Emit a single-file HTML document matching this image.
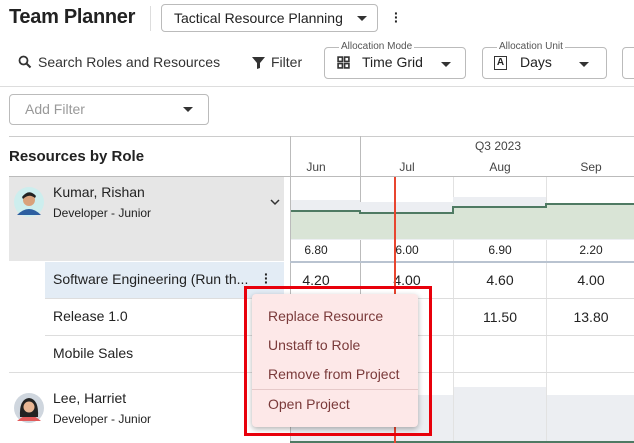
<!DOCTYPE html><html><head><style>
*{box-sizing:border-box;margin:0;padding:0}
body{width:634px;height:443px;overflow:hidden;background:#fff;font-family:"Liberation Sans",sans-serif;color:#222;position:relative}
.a{position:absolute;white-space:nowrap}
.box{position:absolute;border:1px solid #bbb;border-radius:4px}
.lbl{position:absolute;font-size:10px;color:#555;background:#fff;padding:0 2px;top:-7px}
.caret{position:absolute;width:0;height:0;border-left:5px solid transparent;border-right:5px solid transparent;border-top:5px solid #333}
.hl{position:absolute;height:1px;background:#ddd}
.vl{position:absolute;width:1px;background:#e2e2e2}
.n{position:absolute;font-size:14px;transform:translateX(-50%)}
.mi{position:absolute;left:16px;font-size:14px;color:#7a3a3a}
</style></head><body>
<div class="a" style="left:9px;top:6px;font-size:20px;font-weight:bold;color:#222;letter-spacing:-0.3px">Team Planner</div>
<div class="a" style="left:150px;top:6px;width:1px;height:25px;background:#ddd"></div>
<div class="box" style="left:161px;top:4px;width:217px;height:28px"><div class="a" style="left:12px;top:5px;font-size:14px">Tactical Resource Planning</div><div class="caret" style="left:195px;top:11px"></div></div>
<div class="a" style="left:394px;top:11px;font-size:14px;font-weight:bold;line-height:4px">·<br>·<br>·</div>
<svg class="a" style="left:18px;top:55px" width="14" height="14" viewBox="0 0 14 14"><circle cx="5.5" cy="5.5" r="4" stroke="#333" stroke-width="1.8" fill="none"/><path d="M8.5 8.5L12.5 12.5" stroke="#333" stroke-width="2"/></svg>
<div class="a" style="left:38px;top:54px;font-size:14px;color:#333">Search Roles and Resources</div>
<svg class="a" style="left:252px;top:56px" width="13" height="13" viewBox="0 0 13 13"><path d="M0 1h13L8 7v5L5 13V7z" fill="#333"/></svg>
<div class="a" style="left:271px;top:54px;font-size:14px;color:#333">Filter</div>
<div class="box" style="left:324px;top:47px;width:142px;height:32px"><div class="lbl" style="left:14px">Allocation Mode</div>
<svg class="a" style="left:12px;top:8px" width="13" height="13" viewBox="0 0 12 12" fill="none" stroke="#333" stroke-width="1.5"><rect x="1" y="1" width="4" height="4"/><rect x="7" y="1" width="4" height="4"/><rect x="1" y="7" width="4" height="4"/><rect x="7" y="7" width="4" height="4"/></svg>
<div class="a" style="left:37px;top:6px;font-size:14px">Time Grid</div><div class="caret" style="left:116px;top:14px"></div></div>
<div class="box" style="left:482px;top:47px;width:125px;height:32px"><div class="lbl" style="left:14px">Allocation Unit</div>
<div class="a" style="left:11px;top:8px;width:13px;height:14px;border:1.5px solid #333;font-size:10px;text-align:center;line-height:11px;font-weight:bold">A</div>
<div class="a" style="left:37px;top:6px;font-size:14px">Days</div><div class="caret" style="left:96px;top:14px"></div></div>
<div class="box" style="left:622px;top:47px;width:30px;height:32px"></div>
<div class="hl" style="left:0;top:86px;width:634px"></div>
<div class="box" style="left:9px;top:94px;width:200px;height:31px"><div class="a" style="left:15px;top:6px;font-size:14px;color:#999">Add Filter</div><div class="caret" style="left:173px;top:12px"></div></div>
<div class="hl" style="left:9px;top:136px;width:625px;background:#ccc"></div>
<div class="a" style="left:9px;top:148px;font-size:15px;font-weight:bold">Resources by Role</div>
<div class="a" style="left:290px;top:136px;width:1px;height:307px;background:#bbb"></div>
<div class="a" style="left:360px;top:136px;width:1px;height:307px;background:#bbb"></div>
<div class="n" style="left:498px;top:139px;font-size:12px;color:#444">Q3 2023</div>
<div class="n" style="left:316px;top:160px;font-size:12px;color:#444">Jun</div>
<div class="n" style="left:407px;top:160px;font-size:12px;color:#444">Jul</div>
<div class="n" style="left:500px;top:160px;font-size:12px;color:#444">Aug</div>
<div class="n" style="left:591px;top:160px;font-size:12px;color:#444">Sep</div>
<div class="hl" style="left:9px;top:176px;width:625px;background:#bbb"></div>
<div class="vl" style="left:453px;top:177px;height:266px"></div>
<div class="vl" style="left:546px;top:177px;height:266px"></div>
<div class="a" style="left:9px;top:177px;width:275px;height:84px;background:#e6e6e6"></div>
<svg class="a" style="left:291px;top:177px" width="343" height="63"><path d="M0 23H69V25H162V20H255V27H343V63H0Z" fill="#eceef2"/><path d="M0 34H69V36H162V30H255V27H343V62H0Z" fill="#d9e4d6"/><path d="M0 34H69V36H162V30H255V27H343" stroke="#4f7a63" stroke-width="2" fill="none"/></svg>
<svg class="a" style="left:14px;top:187px" width="30" height="30"><circle cx="15" cy="15" r="15" fill="#cdeeee"/><path d="M3 28Q15 16 27 28" fill="#2d5fa0"/><circle cx="15" cy="13" r="6" fill="#d9a27c"/><path d="M8 10Q15 1 22 9L21 11Q15 6 9 12z" fill="#222"/></svg>
<div class="a" style="left:53px;top:184px;font-size:14px">Kumar, Rishan</div>
<div class="a" style="left:53px;top:206px;font-size:12px">Developer - Junior</div>
<svg class="a" style="left:270px;top:199px" width="10" height="7"><path d="M1 1l4 4 4-4" stroke="#333" stroke-width="1.5" fill="none"/></svg>
<div class="n" style="left:316px;top:243px;font-size:12px">6.80</div><div class="n" style="left:407px;top:243px;font-size:12px">6.00</div><div class="n" style="left:500px;top:243px;font-size:12px">6.90</div><div class="n" style="left:591px;top:243px;font-size:12px">2.20</div>
<div class="a" style="left:290px;top:261px;width:344px;height:2px;background:#b9c3d0"></div>
<div class="a" style="left:45px;top:262px;width:239px;height:36px;background:#e3ecf5"></div>
<div class="a" style="left:53px;top:271px;font-size:14px">Software Engineering (Run th...</div>
<div class="a" style="left:264px;top:272px;font-size:14px;font-weight:bold;line-height:4px">·<br>·<br>·</div>
<div class="n" style="left:316px;top:272px">4.20</div><div class="n" style="left:407px;top:272px">4.00</div><div class="n" style="left:500px;top:272px">4.60</div><div class="n" style="left:591px;top:272px">4.00</div>
<div class="hl" style="left:45px;top:298px;width:589px"></div>
<div class="a" style="left:53px;top:308px;font-size:14px">Release 1.0</div>
<div class="n" style="left:500px;top:309px">11.50</div><div class="n" style="left:591px;top:309px">13.80</div>
<div class="hl" style="left:45px;top:335px;width:589px"></div>
<div class="a" style="left:53px;top:345px;font-size:14px">Mobile Sales</div>
<div class="hl" style="left:9px;top:372px;width:625px"></div>
<div class="a" style="left:291px;top:395px;width:162px;height:48px;background:#eceef2"></div>
<div class="a" style="left:454px;top:387px;width:92px;height:56px;background:#eceef2"></div>
<div class="a" style="left:547px;top:395px;width:87px;height:48px;background:#eceef2"></div>
<div class="a" style="left:290px;top:441px;width:344px;height:2px;background:#4f7a63"></div>
<svg class="a" style="left:14px;top:393px" width="30" height="30"><circle cx="15" cy="15" r="15" fill="#cfd6de"/><path d="M3 28Q15 17 27 28" fill="#e25a5a"/><path d="M6 24Q5 6 15 5Q25 6 24 24z" fill="#222"/><circle cx="15" cy="14" r="5.5" fill="#e8b694"/></svg>
<div class="a" style="left:53px;top:390px;font-size:14px">Lee, Harriet</div>
<div class="a" style="left:53px;top:412px;font-size:12px">Developer - Junior</div>
<div class="a" style="left:394px;top:177px;width:1.5px;height:266px;background:#e8452f"></div>
<div class="a" style="left:252px;top:294px;width:166px;height:133px;background:#fde8e8;border-radius:4px;box-shadow:0 2px 6px rgba(0,0,0,.3)">
<div class="mi" style="top:14px">Replace Resource</div>
<div class="mi" style="top:43px">Unstaff to Role</div>
<div class="mi" style="top:72px">Remove from Project</div>
<div class="a" style="left:0;top:95px;width:166px;height:1px;background:#e6c9c9"></div>
<div class="mi" style="top:102px">Open Project</div></div>
<div class="a" style="left:244px;top:286px;width:188px;height:150px;border:3px solid #e8000b"></div>
</body></html>
